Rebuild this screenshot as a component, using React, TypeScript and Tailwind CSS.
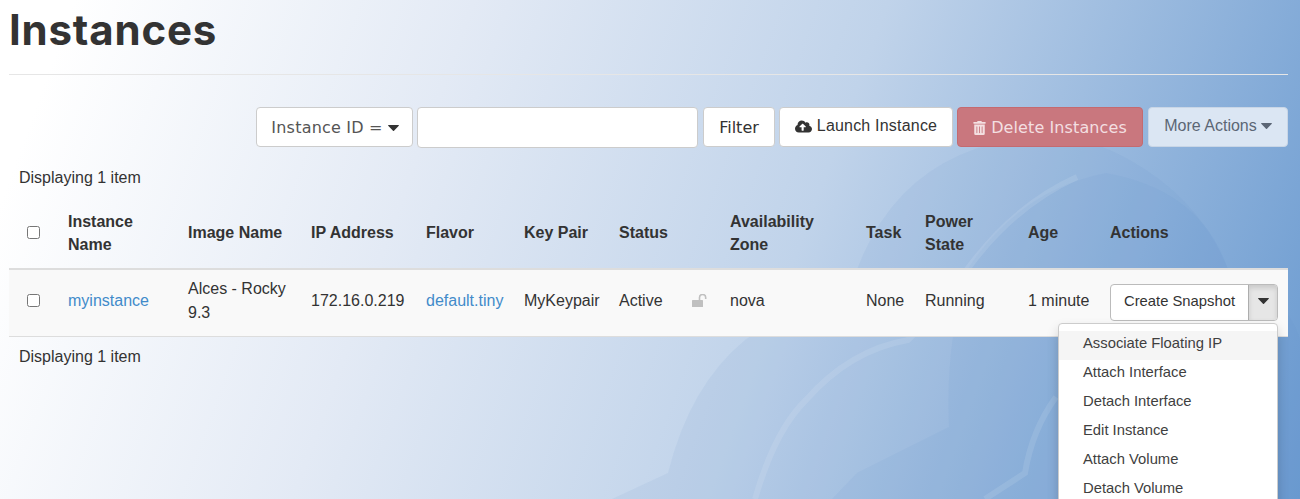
import { FaCloudUploadAlt, FaTrashAlt } from "react-icons/fa";

const menuItems = [
  "Associate Floating IP",
  "Attach Interface",
  "Detach Interface",
  "Edit Instance",
  "Attach Volume",
  "Detach Volume",
];

function Caret({ className }: { className?: string }) {
  return (
    <svg className={className} width="11" height="6" viewBox="0 0 11 6" fill="currentColor">
      <path d="M0.6 0h9.8c.5 0 .7.5.4.8L6 5.7c-.3.3-.7.3-1 0L.2.8C-.1.5.1 0 .6 0z" />
    </svg>
  );
}

function OpenLock() {
  return (
    <svg width="16" height="13" viewBox="0 0 16 13" className="text-[#c0c0c0]">
      <rect x="0" y="6" width="11" height="7" rx="0.5" fill="currentColor" />
      <path d="M7.5 6V3.6a3.1 3.1 0 0 1 6.2 0V5" fill="none" stroke="currentColor" strokeWidth="1.6" />
    </svg>
  );
}

function CloudBackdrop() {
  return (
    <svg className="absolute inset-0 h-full w-full" viewBox="0 0 1300 499" fill="none">
      <path d="M612 499 L668 473 Q690 385 745 340 Q800 300 850 290 Q880 190 960 155 Q1050 115 1130 160 Q1200 200 1227 267 Q1290 300 1300 340 V499 Z" fill="#5f8fc8" fillOpacity="0.09" />
      <path d="M832 499 L857 473 L949 427 Q945 340 969 267 Q1020 190 1106 173 Q1200 190 1227 267 V499 Z" fill="#5f8fc8" fillOpacity="0.08" />
      <path d="M755 499 Q775 430 806 400 Q850 350 908 340 Q940 310 969 267 Q1015 205 1077 177" stroke="#ffffff" strokeOpacity="0.1" strokeWidth="6" />
      <path d="M985 499 L1025 473 Q1032 430 1056 397" stroke="#ffffff" strokeOpacity="0.1" strokeWidth="6" />
    </svg>
  );
}

export default function App() {
  return (
    <div className="relative h-[499px] w-full overflow-hidden bg-[linear-gradient(110deg,#ffffff_5%,#e3eaf5_32%,#c0d3ea_60%,#6a9ad0_100%)] font-['Liberation_Sans',sans-serif] text-base text-[#333333]">
      <CloudBackdrop />

      <div className="relative pl-[9px] pr-[12px]">
        {/* Page title */}
        <div className="h-[75px] border-b border-[#e6e6e6]">
          <h1 className="font-['Inter',sans-serif] text-[42px] font-bold leading-[60px] tracking-[0.8px]">Instances</h1>
        </div>

        {/* Toolbar */}
        <div className="mt-[32px] flex items-start justify-end">
          <button className="flex h-10 w-[157px] items-center justify-center gap-[5px] rounded border border-[#cccccc] bg-white pl-px pt-0.5 font-['DejaVu_Sans',sans-serif] text-base tracking-[0.2px] text-[#555555]">
            Instance ID =
            <Caret className="text-[#333333]" />
          </button>
          <input className="ml-1 h-[41px] w-[281px] rounded border border-[#cccccc] bg-white" />
          <button className="ml-[5px] h-10 w-[72px] rounded border border-[#cccccc] bg-white pt-0.5 font-['DejaVu_Sans',sans-serif] text-base text-[#333333]">
            Filter
          </button>
          <button className="ml-1 flex h-10 w-[174px] items-center justify-center gap-[5px] rounded border border-[#cccccc] bg-white pb-0.5 text-base tracking-[0.2px] text-[#333333]">
            <FaCloudUploadAlt className="h-[17px] w-[17px]" />
            Launch Instance
          </button>
          <button className="ml-1 flex h-10 w-[186px] items-center justify-center gap-[5px] rounded border border-[#c46a70] bg-[#c9777e] pt-0.5 font-['DejaVu_Sans',sans-serif] text-base tracking-[0.1px] text-[#f3dfe1]">
            <FaTrashAlt className="h-[14px] w-[13px]" />
            Delete Instances
          </button>
          <button className="ml-[5px] flex h-10 w-[140px] items-center justify-center gap-1 rounded border border-[#c9d6e6] bg-[#dbe6f3] pb-0.5 text-base text-[#5b6675]">
            More Actions
            <Caret />
          </button>
        </div>

        <p className="mt-[18px] h-[24px] pl-[10px] leading-6">Displaying 1 item</p>

        {/* Instances table */}
        <table className="mt-[7px] w-[1279px] table-fixed border-collapse text-left">
          <colgroup>
            <col className="w-[49px]" />
            <col className="w-[120px]" />
            <col className="w-[123px]" />
            <col className="w-[115px]" />
            <col className="w-[98px]" />
            <col className="w-[95px]" />
            <col className="w-[111px]" />
            <col className="w-[136px]" />
            <col className="w-[59px]" />
            <col className="w-[103px]" />
            <col className="w-[82px]" />
            <col className="w-[188px]" />
          </colgroup>
          <thead>
            <tr className="h-[72px] border-b-[2px] border-[#dddddd] font-bold leading-[23px]">
              <th className="pl-[18px]"><input type="checkbox" className="block" /></th>
              <th className="px-[10px]">Instance Name</th>
              <th className="px-[10px]">Image Name</th>
              <th className="px-[10px]">IP Address</th>
              <th className="px-[10px]">Flavor</th>
              <th className="px-[10px]">Key Pair</th>
              <th className="px-[10px]">Status</th>
              <th className="px-[10px]">Availability Zone</th>
              <th className="px-[10px]">Task</th>
              <th className="px-[10px]">Power State</th>
              <th className="px-[10px]">Age</th>
              <th className="px-[10px]">Actions</th>
            </tr>
          </thead>
          <tbody>
            <tr className="h-[67px] border-b border-[#dddddd] bg-[#f9f9f9] leading-6">
              <td className="pb-[4px] pl-[18px]"><input type="checkbox" className="block" /></td>
              <td className="px-[10px] pb-[4px] text-[#428bca]">myinstance</td>
              <td className="px-[10px] pb-[4px]">Alces - Rocky 9.3</td>
              <td className="px-[10px] pb-[4px]">172.16.0.219</td>
              <td className="px-[10px] pb-[4px] text-[#428bca]">default.tiny</td>
              <td className="px-[10px] pb-[4px]">MyKeypair</td>
              <td className="pb-[4px] pl-[10px] pr-3">
                <div className="flex items-center justify-between">
                  Active
                  <OpenLock />
                </div>
              </td>
              <td className="px-[10px] pb-[4px]">nova</td>
              <td className="px-[10px] pb-[4px]">None</td>
              <td className="px-[10px] pb-[4px]">Running</td>
              <td className="px-[10px] pb-[4px]">1 minute</td>
              <td className="px-[10px]">
                <div className="flex h-[37px] w-[168px] overflow-hidden rounded border border-[#bbbbbb] bg-white text-[14.8px]">
                  <span className="flex flex-1 items-center justify-center pb-1">Create Snapshot</span>
                  <span className="flex w-[29px] items-center justify-center border-l border-[#adadad] bg-[#e6e6e6] pb-1 shadow-[inset_0_3px_5px_rgba(0,0,0,0.125)]">
                    <Caret />
                  </span>
                </div>
              </td>
            </tr>
          </tbody>
        </table>

        <p className="mt-[8px] pl-[10px] leading-6">Displaying 1 item</p>
      </div>

      {/* Open row actions menu */}
      <ul className="absolute left-[1058px] top-[323px] w-[220px] rounded border border-[#cccccc] bg-white py-[7px] text-[14.8px] text-[#3f3f3f] shadow-[0_6px_12px_rgba(0,0,0,0.175)]">
        {menuItems.map((item, i) => (
          <li key={item} className={`h-[29px] pl-6 leading-[24px] ${i === 0 ? "bg-[#f5f5f5]" : ""}`}>
            {item}
          </li>
        ))}
      </ul>
    </div>
  );
}
